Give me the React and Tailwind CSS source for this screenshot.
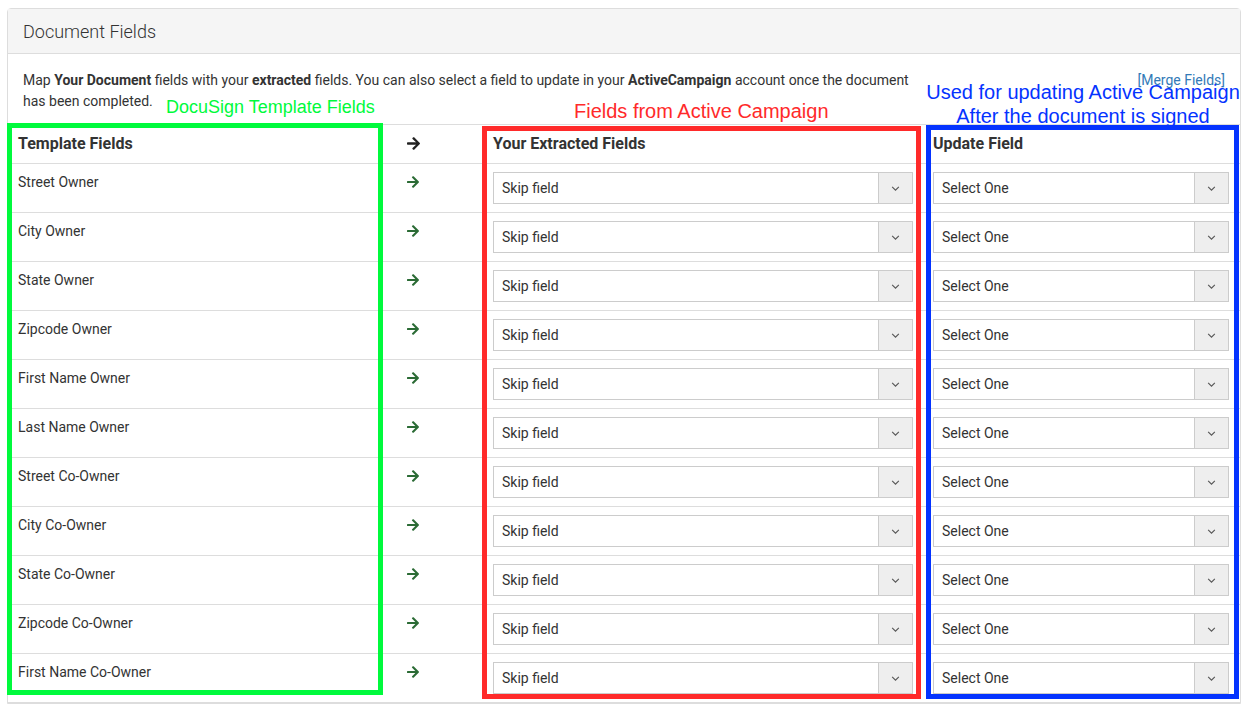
const templateFields = [
  'Street Owner',
  'City Owner',
  'State Owner',
  'Zipcode Owner',
  'First Name Owner',
  'Last Name Owner',
  'Street Co-Owner',
  'City Co-Owner',
  'State Co-Owner',
  'Zipcode Co-Owner',
  'First Name Co-Owner',
];

function ArrowRight({ className }) {
  return (
    <svg viewBox="0 0 448 512" className={className} fill="currentColor">
      <path d="M190.5 66.9l22.2-22.2c9.4-9.4 24.6-9.4 33.9 0L441 239c9.4 9.4 9.4 24.6 0 33.9L246.6 467.3c-9.4 9.4-24.6 9.4-33.9 0l-22.2-22.2c-9.5-9.5-9.3-25 .4-34.3L311.4 296H24c-13.3 0-24-10.7-24-24v-32c0-13.3 10.7-24 24-24h287.4L190.9 101.2c-9.8-9.3-10-24.8-.4-34.3z" />
    </svg>
  );
}

function FakeSelect({ label }) {
  return (
    <div className="flex h-8 w-full border border-[#ccc] bg-white">
      <div className="flex-1 pl-2 leading-[30px] text-[14px] text-[#333]">{label}</div>
      <div className="flex w-[34px] items-center justify-center border-l border-[#ccc] bg-[#eee]">
        <svg viewBox="0 0 10 6" className="h-[5px] w-[9px] text-[#555]" fill="none" stroke="currentColor" strokeWidth="1.3">
          <polyline points="1,1 5,5 9,1" />
        </svg>
      </div>
    </div>
  );
}

export default function App() {
  return (
    <div className="relative min-h-screen bg-white px-[7px] pt-2 font-['Roboto',sans-serif] text-[#333]">
      <div className="rounded-t border border-[#ddd]">
        {/* Header */}
        <div className="flex h-[45px] items-center border-b border-[#ddd] bg-[#f5f5f5] px-[15px] text-[18px] font-light text-[#333]">
          Document Fields
        </div>

        {/* Intro */}
        <div className="flex px-[15px] pt-[16px] pb-[12px] text-[14px] leading-[21px]">
          <p className="w-[900px]">
            Map <b>Your Document</b> fields with your <b>extracted</b> fields. You can also select a field to update in
            your <b>ActiveCampaign</b> account once the document has been completed.
          </p>
          <div className="flex-1 text-right">
            <a className="text-[#337ab7]">[Merge Fields]</a>
          </div>
        </div>

        {/* Table */}
        <div className="border-b border-[#ddd]">
          <div className="grid h-[39px] grid-cols-[375px_102px_440px_1fr] border-t border-[#ddd] text-[16px] font-bold leading-5">
            <div className="pl-[10px] pt-[9px]">Template Fields</div>
            <div className="pl-[24px] pt-[11px]">
              <ArrowRight className="h-[15px] w-[13px] text-[#222]" />
            </div>
            <div className="pl-2 pt-[9px]">Your Extracted Fields</div>
            <div className="pl-2 pt-[9px]">Update Field</div>
          </div>
          {templateFields.map((f) => (
            <div key={f} className="grid grid-cols-[375px_102px_440px_1fr] border-t border-[#ddd] text-[14px] leading-5">
              <div className="pl-[10px] pt-2">{f}</div>
              <div className="pl-[24px] pt-[11px]">
                <ArrowRight className="h-[14px] w-[12px] text-[#2b6b35]" />
              </div>
              <div className="py-2 pl-2 pr-3">
                <FakeSelect label="Skip field" />
              </div>
              <div className="py-2 pl-2 pr-[11px]">
                <FakeSelect label="Select One" />
              </div>
            </div>
          ))}
        </div>
      </div>

      {/* Annotations drawn over the screenshot */}
      <div className="pointer-events-none absolute left-[7px] top-[123px] h-[572px] w-[376px] border-[5px] border-[#00fa3c]" />
      <div className="pointer-events-none absolute left-[482px] top-[126px] h-[573px] w-[439px] border-[5px] border-[#ff2a2a]" />
      <div className="pointer-events-none absolute left-[926px] top-[125px] h-[574px] w-[313px] border-[5px] border-[#0433ff]" />

      <div className="pointer-events-none absolute left-[166px] top-[96px] font-['Liberation_Sans',Arial,sans-serif] text-[18px] leading-[22px] text-[#00fa3c]">
        DocuSign Template Fields
      </div>
      <div className="pointer-events-none absolute left-[574px] top-[99px] font-['Liberation_Sans',Arial,sans-serif] text-[20px] leading-6 text-[#ff2a2a]">
        Fields from Active Campaign
      </div>
      <div className="pointer-events-none absolute left-[920px] top-[80px] w-[326px] whitespace-nowrap text-center font-['Liberation_Sans',Arial,sans-serif] text-[20px] leading-6 text-[#0433ff]">
        Used for updating Active Campaign
        <br />
        After the document is signed
      </div>
    </div>
  );
}
